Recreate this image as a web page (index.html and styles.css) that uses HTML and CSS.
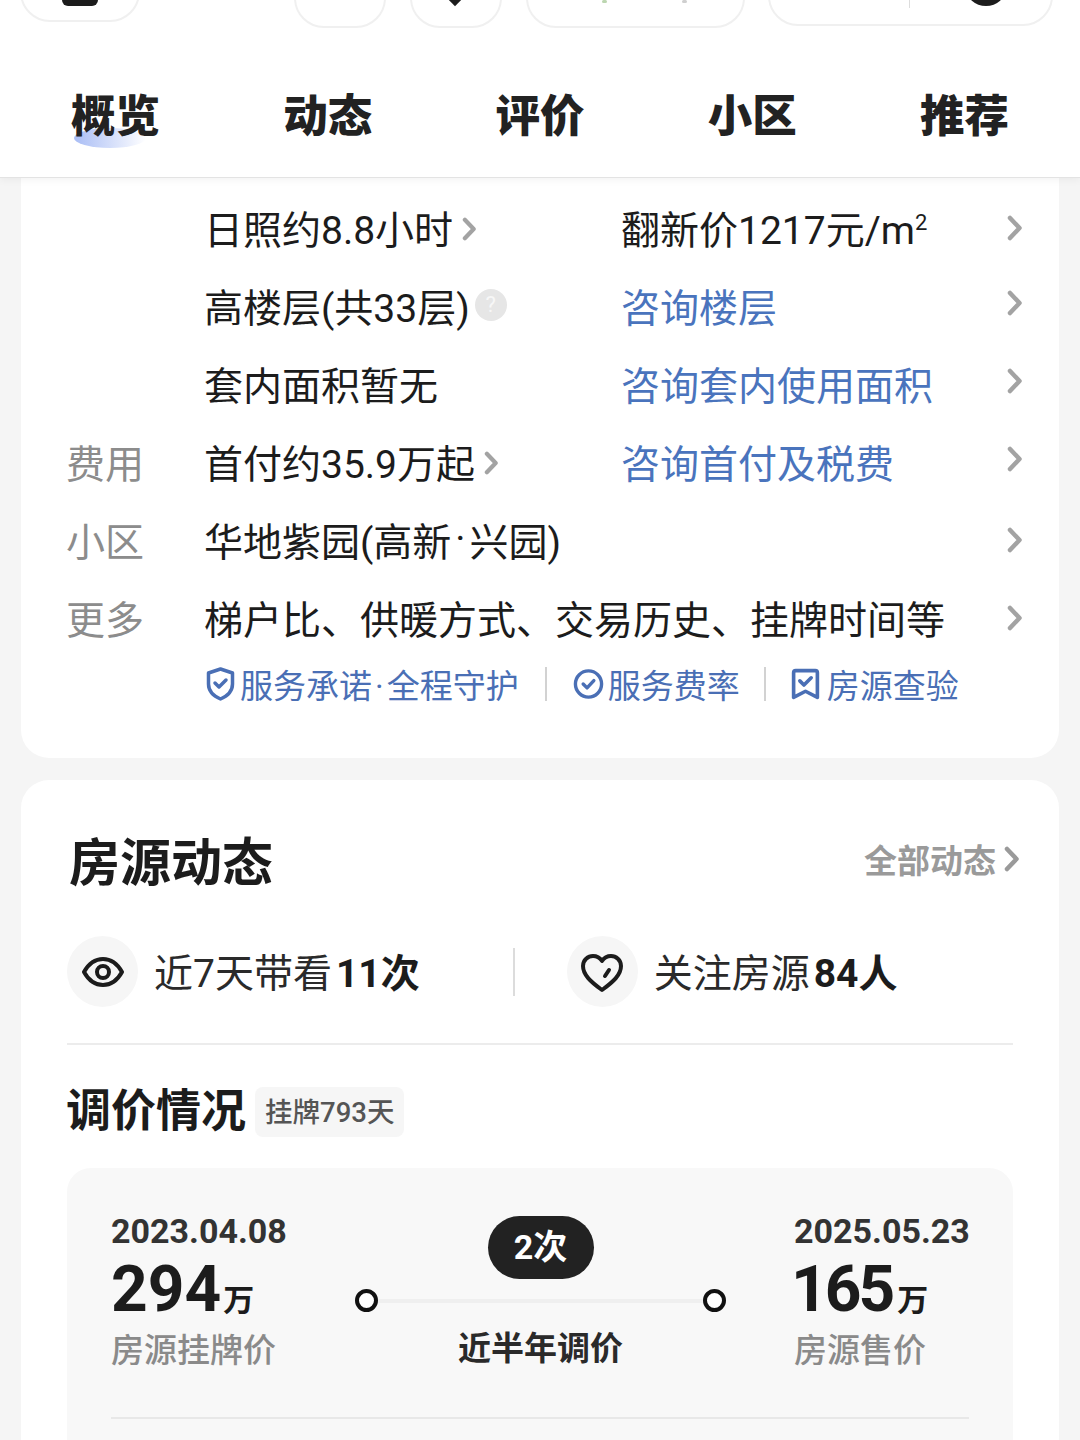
FILE: index.html
```html
<!DOCTYPE html>
<html lang="zh-CN">
<head>
    <meta charset="UTF-8">
    <meta name="viewport" content="width=device-width, initial-scale=1.0">
    <title>房源详情</title>
    <link rel="stylesheet" href="styles.css">
</head>
<body>
    <svg class="defs" width="0" height="0">
        <symbol id="chevron" viewBox="0 0 16 28">
            <path d="M3 4l9.500 10L3 24" fill="none" stroke="currentColor" stroke-width="4.500" stroke-linecap="round" stroke-linejoin="round"/>
        </symbol>
    </svg>

    <header class="header">
        <div class="pill-strip">
            <div class="pill pill-a"><span class="pill-dot square"></span></div>
            <div class="pill pill-b"></div>
            <div class="pill pill-c"><span class="pill-dot diamond"></span></div>
            <div class="pill pill-d"><span class="fleck green"></span><span class="fleck grey"></span></div>
            <div class="pill pill-e"><span class="pill-line"></span><span class="pill-dot round"></span></div>
        </div>
        <nav class="tabs">
            <a class="tab active">概览</a>
            <a class="tab">动态</a>
            <a class="tab">评价</a>
            <a class="tab">小区</a>
            <a class="tab">推荐</a>
        </nav>
    </header>

    <main class="page">
        <section class="card info-card">
            <div class="row">
                <span class="row-label"></span>
                <span class="row-value">日照约8.8小时<svg class="chev-inline"><use href="#chevron"/></svg></span>
                <span class="row-extra">翻新价1217元/m<sup>2</sup></span>
                <svg class="chev"><use href="#chevron"/></svg>
            </div>
            <div class="row">
                <span class="row-label"></span>
                <span class="row-value">高楼层(共33层)<span class="help">?</span></span>
                <span class="row-extra link">咨询楼层</span>
                <svg class="chev up"><use href="#chevron"/></svg>
            </div>
            <div class="row">
                <span class="row-label"></span>
                <span class="row-value">套内面积暂无</span>
                <span class="row-extra link">咨询套内使用面积</span>
                <svg class="chev up"><use href="#chevron"/></svg>
            </div>
            <div class="row">
                <span class="row-label">费用</span>
                <span class="row-value">首付约35.9万起<svg class="chev-inline"><use href="#chevron"/></svg></span>
                <span class="row-extra link">咨询首付及税费</span>
                <svg class="chev up"><use href="#chevron"/></svg>
            </div>
            <div class="row">
                <span class="row-label">小区</span>
                <span class="row-value wide">华地紫园(高新<span class="dot">·</span>兴园)</span>
                <svg class="chev"><use href="#chevron"/></svg>
            </div>
            <div class="row">
                <span class="row-label">更多</span>
                <span class="row-value wide">梯户比、供暖方式、交易历史、挂牌时间等</span>
                <svg class="chev"><use href="#chevron"/></svg>
            </div>
            <div class="services">
                <span class="service">
                    <svg class="service-icon" viewBox="0 0 30 34"><path d="M15 2l12 4v11c0 7-5 12-12 15C8 29 3 24 3 17V6z"/><path d="M9.500 16l4 4L20.500 13"/></svg>
                    <span>服务承诺<span class="dot">·</span>全程守护</span>
                </span>
                <span class="service-sep"></span>
                <span class="service">
                    <svg class="service-icon" viewBox="0 0 32 32"><circle cx="16" cy="16" r="13.500"/><path d="M10.500 16l4 4L21.500 12.500"/></svg>
                    服务费率
                </span>
                <span class="service-sep narrow"></span>
                <span class="service">
                    <svg class="service-icon book" viewBox="0 0 30 32"><path d="M3.500 5q0-2 2-2h19q2 0 2 2v24l-11.500-6-11.500 6z"/><path d="M9.500 13l4 4L20.500 10"/></svg>
                    房源查验
                </span>
            </div>
        </section>

        <section class="card dynamic-card">
            <div class="card-head">
                <h2 class="card-title">房源动态</h2>
                <span class="more">全部动态<svg class="chev-more"><use href="#chevron"/></svg></span>
            </div>
            <div class="stats">
                <div class="stat">
                    <span class="stat-icon">
                        <svg viewBox="0 0 42 42" width="42" height="42"><path d="M2 21C7 12 13 8 21 8s14 4 19 13c-5 9-11 13-19 13S7 30 2 21z"/><circle cx="21" cy="21" r="6"/></svg>
                    </span>
                    <span class="stat-text">近7天带看<b>11次</b></span>
                </div>
                <span class="stat-sep"></span>
                <div class="stat">
                    <span class="stat-icon">
                        <svg viewBox="0 0 42 42" width="42" height="42"><path d="M21 39C10 31 2 24 2 15 2 9 7 5 12 5c4 0 7 2 9 5 2-3 5-5 9-5 5 0 10 4 10 10 0 9-8 16-19 24z"/><path d="M24 25l4-6"/></svg>
                    </span>
                    <span class="stat-text">关注房源<b>84人</b></span>
                </div>
            </div>
            <div class="sub-head">
                <h3 class="sub-title">调价情况</h3>
                <span class="tag">挂牌793天</span>
            </div>
            <div class="price-panel">
                <div class="price-grid">
                    <div class="price-col">
                        <div class="price-date">2023.04.08</div>
                        <div class="price-num">294<small>万</small></div>
                        <div class="price-label">房源挂牌价</div>
                    </div>
                    <div class="timeline">
                        <span class="times">2次</span>
                        <div class="track">
                            <span class="node"></span>
                            <span class="track-line"></span>
                            <span class="node"></span>
                        </div>
                        <div class="track-label">近半年调价</div>
                    </div>
                    <div class="price-col">
                        <div class="price-date">2025.05.23</div>
                        <div class="price-num tight">165<small>万</small></div>
                        <div class="price-label">房源售价</div>
                    </div>
                </div>
                <div class="panel-rule"></div>
            </div>
        </section>
    </main>
</body>
</html>
```

FILE: styles.css
```css
html, body {
    margin: 0;
    padding: 0;
}
body {
    width: 1080px;
    height: 1440px;
    overflow: hidden;
    background: #f5f5f5;
    color: #1c1c1c;
    font-family: Roboto, 'Noto Sans CJK SC', sans-serif;
}
.defs {
    display: block;
    height: 0;
}

/* header */
.header {
    position: relative;
    z-index: 2;
    height: 177px;
    background: white;
    border-bottom: 1px solid #e3e3e3;
    box-shadow: 0 2px 8px rgba(0,0,0,0.05);
}
.pill-strip {
    display: flex;
    align-items: flex-start;
    height: 30px;
    overflow: hidden;
}
.pill {
    box-sizing: border-box;
    position: relative;
    flex: none;
    height: 60px;
    margin-top: -32px;
    background: white;
    border: 2px solid #f0f0f0;
    border-radius: 30px;
}
.pill-a { width: 120px; margin-left: 20px; margin-top: -38px; }
.pill-b { width: 92px; margin-left: 154px; }
.pill-c { width: 92px; margin-left: 24px; }
.pill-d { width: 219px; margin-left: 24px; }
.pill-e { width: 285px; margin-left: 23px; margin-top: -34px; }
.pill-dot {
    position: absolute;
    background: #1c1c1c;
}
.pill-dot.square {
    left: 40px;
    top: 30px;
    width: 36px;
    height: 12px;
    border-radius: 0 0 6px 6px;
}
.pill-dot.diamond {
    left: 33px;
    top: 12px;
    width: 20px;
    height: 20px;
    transform: rotate(45deg);
}
.pill-dot.round {
    left: 196px;
    top: 2px;
    width: 40px;
    height: 36px;
    border-radius: 50%;
}
.pill-line {
    position: absolute;
    left: 139px;
    top: 20px;
    width: 1px;
    height: 20px;
    background: #ddd;
}
.fleck {
    position: absolute;
    top: 30px;
    width: 5px;
    height: 3px;
    border-radius: 2px;
}
.fleck.green { left: 74px; background: #bcd6b0; }
.fleck.grey { left: 154px; background: #cfcfcf; }
.tabs {
    display: flex;
    justify-content: space-between;
    padding: 55px 71px 0 71px;
}
.tab {
    position: relative;
    font-size: 44.500px;
    line-height: 64px;
    font-weight: 900;
    color: #222;
}
.tab.active::before {
    content: "";
    position: absolute;
    left: 3px;
    top: 43px;
    width: 72px;
    height: 20px;
    border-radius: 50%;
    background: linear-gradient(90deg, #a9bdf5 0%, #e4eafc 70%, #ffffff 100%);
    z-index: -1;
}

/* cards */
.page {
    padding: 0 21px;
}
.card {
    background: white;
    border-radius: 28px;
    padding-left: 46px;
    padding-right: 46px;
}
.info-card {
    height: 580px;
    box-sizing: border-box;
    padding-top: 10px;
    border-radius: 0 0 28px 28px;
}
.row {
    display: grid;
    grid-template-columns: 137px 417px 1fr 16px;
    align-items: center;
    height: 78px;
    font-size: 39px;
}
.row-label {
    margin-left: -1px;
    color: #8c8c8c;
}
.row-value {
    display: flex;
    align-items: center;
    white-space: nowrap;
}
.row-value.wide {
    grid-column: 2 / 4;
}
.dot {
    margin: 0 4px;
}
.row-extra sup {
    font-size: 22px;
    line-height: 0;
}
.row-extra.link {
    color: #4a74bd;
}
.chev {
    width: 16px;
    height: 28px;
    margin-left: 10px;
    margin-top: 2px;
    color: #a3a3a3;
}
.chev.up {
    margin-top: 0;
    margin-bottom: 4px;
}
.chev-inline {
    width: 15px;
    height: 26px;
    margin-left: 9px;
    margin-top: 4px;
    color: #a3a3a3;
}
.help {
    display: inline-block;
    width: 32px;
    height: 32px;
    margin-left: 5px;
    border-radius: 50%;
    background: #e6e6e6;
    color: #f7f7f7;
    font-size: 22px;
    line-height: 32px;
    text-align: center;
}
.services {
    display: flex;
    align-items: center;
    height: 54px;
    margin: 1px 0 0 138px;
    font-size: 33px;
    color: #4a6fb5;
    white-space: nowrap;
}
.service {
    display: flex;
    align-items: center;
    gap: 4px;
}
.service .dot {
    margin: 0 3px;
}
.service-icon {
    width: 31px;
    height: 34px;
    fill: none;
    stroke: #4a6fb5;
    stroke-width: 3.500;
    stroke-linejoin: round;
    stroke-linecap: round;
}
.service-icon.book {
    margin-right: 2px;
}
.service-sep {
    width: 2px;
    height: 34px;
    margin: 0 26px;
    background: #d2d2d2;
}
.service-sep.narrow {
    margin: 0 24px;
}

.dynamic-card {
    height: 660px;
    box-sizing: border-box;
    overflow: hidden;
    margin-top: 22px;
    padding-top: 46px;
    border-radius: 28px 28px 0 0;
}
.card-head {
    display: flex;
    justify-content: space-between;
    align-items: center;
    height: 72px;
}
.card-title {
    margin: 4px 0 0 2px;
    font-size: 51px;
    line-height: 64px;
    font-weight: 700;
}
.more {
    display: flex;
    align-items: center;
    margin-right: -7px;
    margin-bottom: 6px;
    font-size: 33px;
    font-weight: 700;
    color: #9a9a9a;
}
.chev-more {
    width: 16px;
    height: 28px;
    margin-left: 8px;
    color: #9a9a9a;
}
.stats {
    display: flex;
    align-items: center;
    height: 71px;
    margin-top: 38px;
    padding-bottom: 36px;
    border-bottom: 2px solid #ececec;
}
.stat {
    display: flex;
    align-items: center;
    gap: 16px;
}
.stat-icon {
    display: flex;
    align-items: center;
    justify-content: center;
    width: 71px;
    height: 71px;
    border-radius: 50%;
    background: #f6f6f6;
}
.stat-icon svg {
    fill: none;
    stroke: #1c1c1c;
    stroke-width: 4;
    stroke-linecap: round;
    stroke-linejoin: round;
}
.stat-text {
    margin-bottom: 3px;
    font-size: 39px;
    color: #2a2a2a;
    white-space: nowrap;
}
.stat-text b {
    margin-left: 4px;
    font-weight: 700;
    color: #1c1c1c;
}
.stat-sep {
    width: 2px;
    height: 48px;
    margin: 0 52px 0 93px;
    background: #dcdcdc;
}
.sub-head {
    display: flex;
    align-items: center;
    gap: 9px;
    margin-top: 42px;
}
.sub-title {
    margin: 0 0 0 -1px;
    font-size: 45px;
    line-height: 50px;
    font-weight: 700;
}
.tag {
    padding: 0 10px;
    height: 50px;
    border-radius: 8px;
    background: #f6f6f6;
    color: #555;
    font-size: 27.500px;
    font-weight: 500;
    line-height: 52px;
}
.price-panel {
    box-sizing: border-box;
    height: 272px;
    margin-top: 31px;
    padding: 44px 44px 0;
    border-radius: 24px 24px 0 0;
    background: #f8f8f8;
}
.price-grid {
    display: grid;
    grid-template-columns: 244px 371px 1fr;
    height: 205px;
}
.price-date {
    font-size: 34px;
    line-height: 38px;
    font-weight: 700;
    color: #333;
}
.price-num {
    margin-top: 2px;
    font-size: 64px;
    line-height: 76px;
    font-weight: 700;
}
.price-num small {
    margin-left: 2px;
    font-size: 31px;
    font-weight: 700;
}
.price-num.tight {
    margin-left: -3px;
    letter-spacing: -3px;
}
.price-num.tight small {
    margin-left: 5px;
    letter-spacing: 0;
}
.price-label {
    margin-top: -10px;
    font-size: 33px;
    line-height: 44px;
    font-weight: 500;
    color: #8a8a8a;
}
.price-grid .price-col:last-child {
    margin-left: 68px;
}
.timeline {
    display: flex;
    flex-direction: column;
    align-items: center;
    margin-top: 4px;
}
.times {
    width: 106px;
    height: 63px;
    border-radius: 32px;
    background: #222;
    color: white;
    font-size: 34px;
    font-weight: 700;
    line-height: 63px;
    text-align: center;
}
.track {
    display: flex;
    align-items: center;
    align-self: stretch;
    margin-top: 10px;
}
.node {
    box-sizing: border-box;
    flex: none;
    width: 23px;
    height: 23px;
    border: 4px solid #111;
    border-radius: 50%;
    background: white;
}
.track-line {
    flex: 1;
    height: 4px;
    background: #efefef;
}
.track-label {
    margin-top: 15px;
    font-size: 33px;
    line-height: 44px;
    font-weight: 700;
    color: #2a2a2a;
}
.panel-rule {
    height: 2px;
    background: #e8e8e8;
}
```
